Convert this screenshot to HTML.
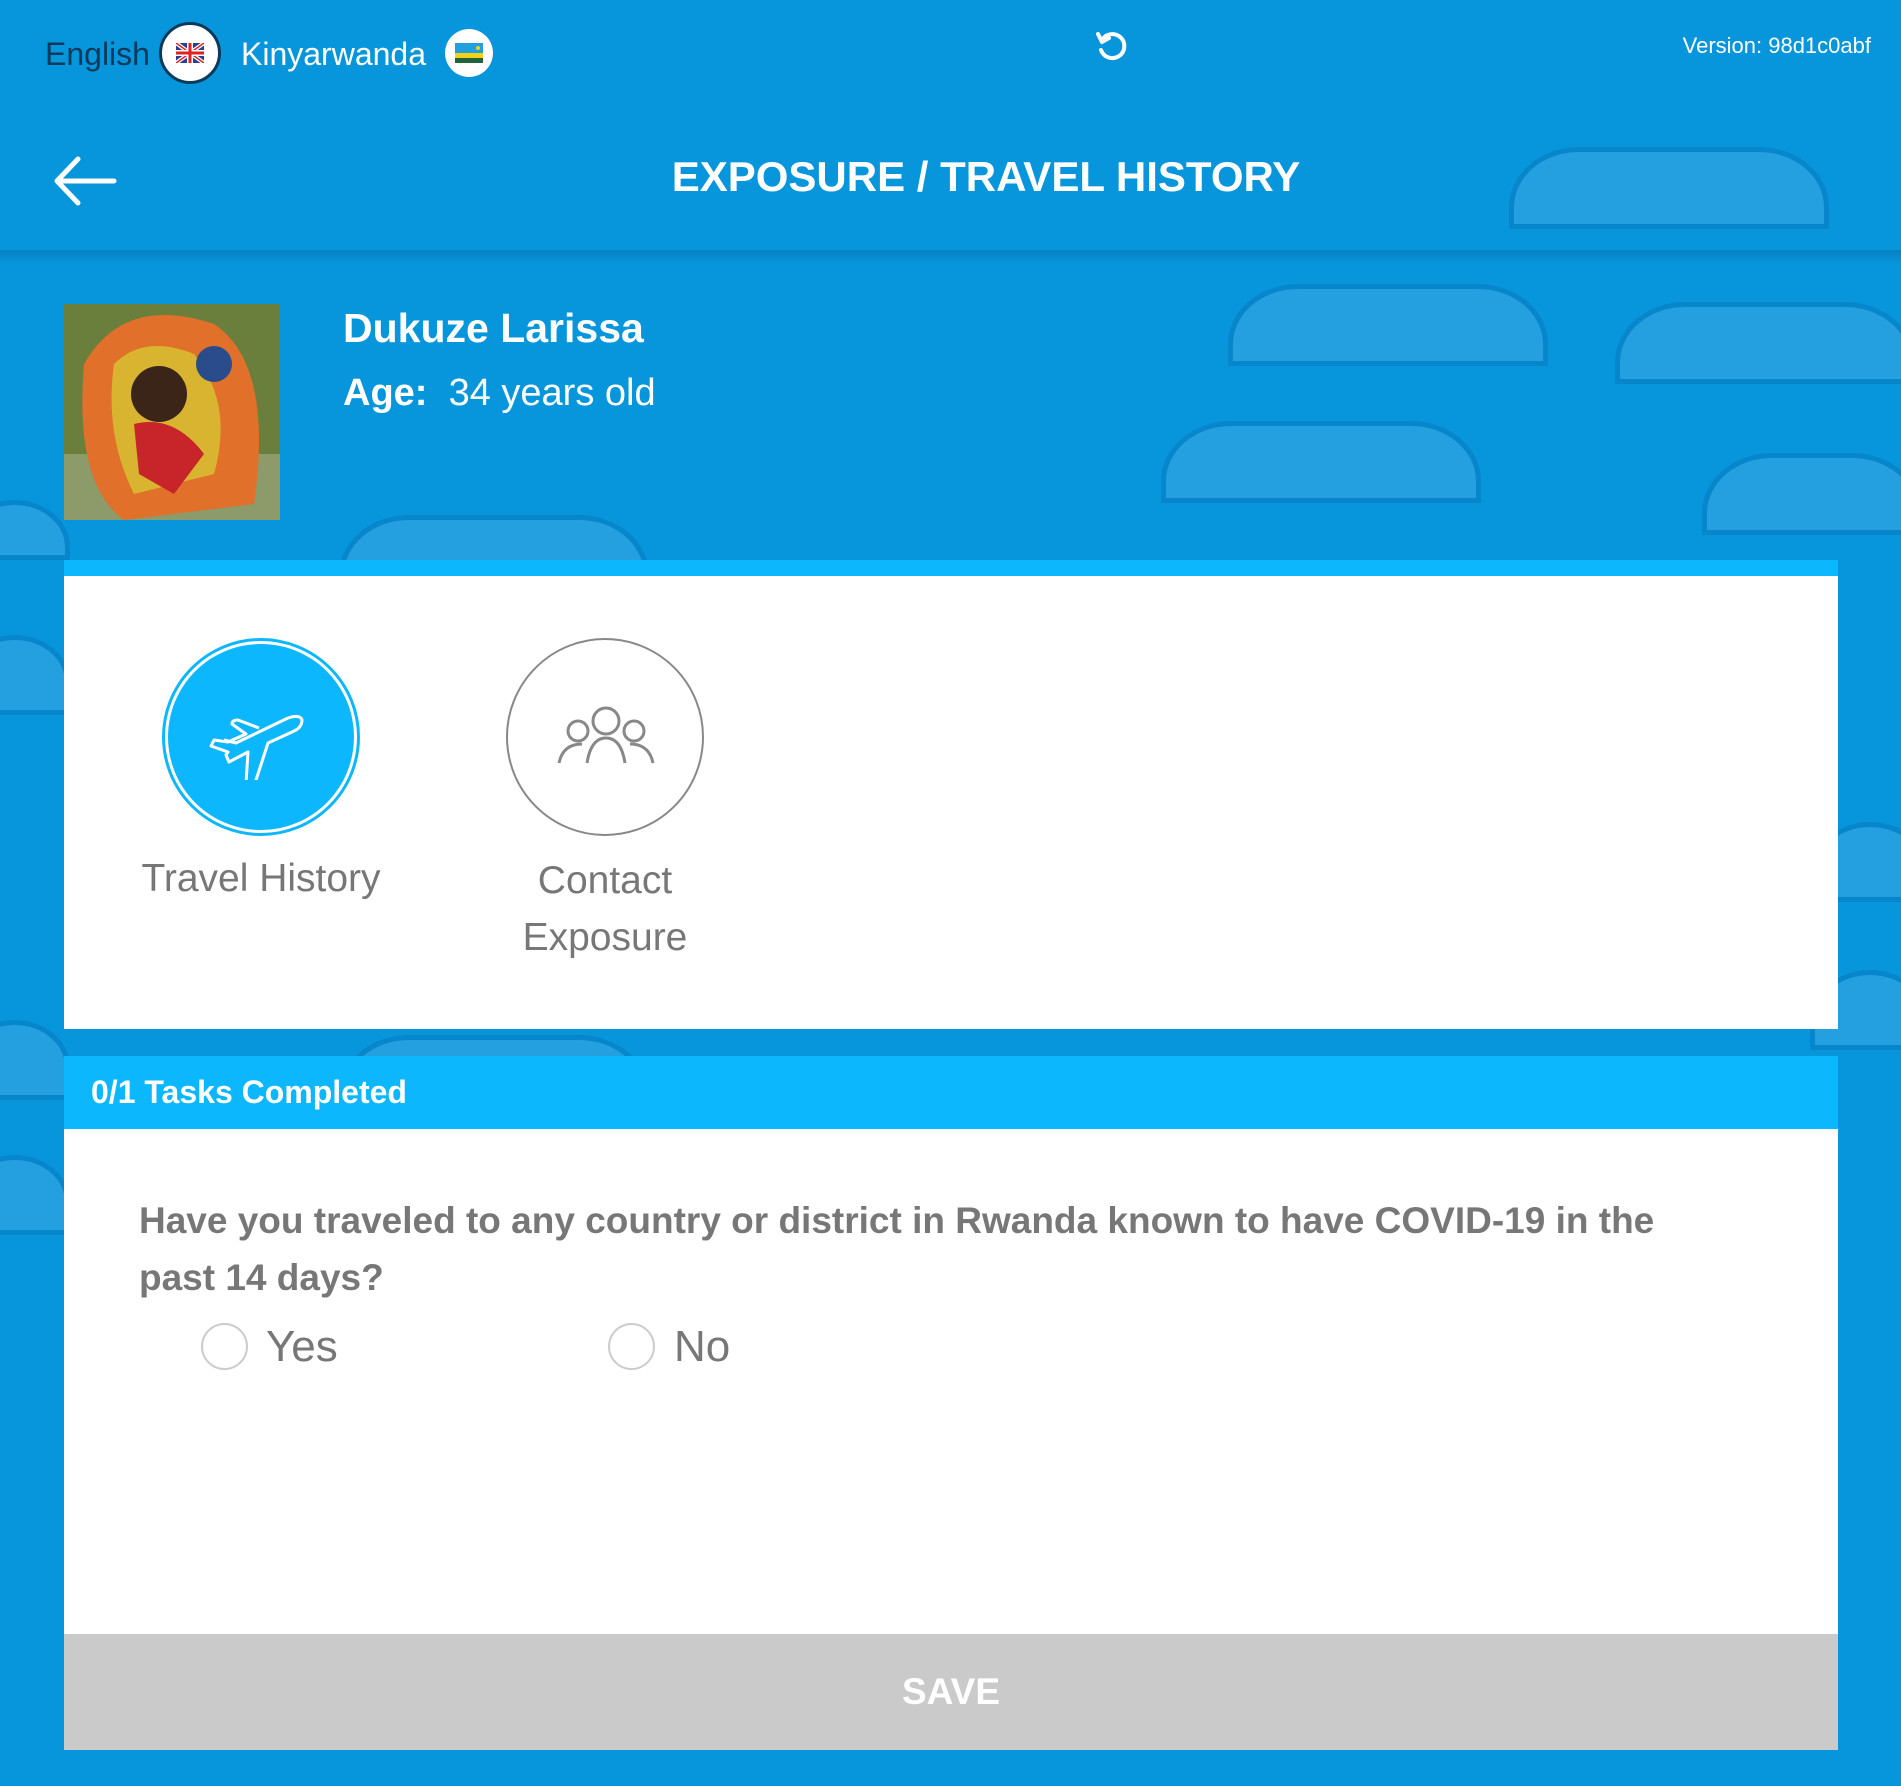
<!DOCTYPE html>
<html><head><meta charset="utf-8"><style>
*{margin:0;padding:0;box-sizing:border-box}
body{width:1901px;height:1786px;background:#0795dc;font-family:"Liberation Sans",sans-serif;position:relative;overflow:hidden}
.dome{position:absolute;background:#249fe0;border:5px solid #0786cc;border-radius:70px 70px 0 0/60px 60px 0 0}
.abs{position:absolute}
.hdrshadow{position:absolute;left:0;top:250px;width:1901px;height:14px;background:linear-gradient(#0781c4,rgba(7,149,220,0))}
</style></head><body>
<div class="dome" style="left:1509px;top:147px;width:320px;height:82px"></div>
<div class="dome" style="left:1228px;top:284px;width:320px;height:82px"></div>
<div class="dome" style="left:1615px;top:302px;width:300px;height:82px"></div>
<div class="dome" style="left:1161px;top:421px;width:320px;height:82px"></div>
<div class="dome" style="left:1702px;top:453px;width:220px;height:82px"></div>
<div class="dome" style="left:339px;top:515px;width:310px;height:82px"></div>
<div class="dome" style="left:-40px;top:500px;width:110px;height:60px"></div>
<div class="dome" style="left:-40px;top:635px;width:110px;height:80px"></div>
<div class="dome" style="left:-40px;top:1020px;width:110px;height:80px"></div>
<div class="dome" style="left:-40px;top:1155px;width:110px;height:80px"></div>
<div class="dome" style="left:1810px;top:822px;width:120px;height:80px"></div>
<div class="dome" style="left:1810px;top:970px;width:120px;height:80px"></div>
<div class="dome" style="left:339px;top:1035px;width:310px;height:82px"></div>
<div class="hdrshadow"></div>

<div class="abs" style="left:45px;top:36px;font-size:32px;color:#0c3a5a">English</div>
<div class="abs" style="left:159px;top:22px;width:62px;height:62px;border-radius:50%;border:3px solid #0c3a5a;background:#fff;padding:0"></div>
<svg class="abs" style="left:176px;top:43px" width="28" height="20" viewBox="0 0 28 20"><rect width="28" height="20" fill="#2a3f8f"/><path d="M0 0L28 20M28 0L0 20" stroke="#fff" stroke-width="4"/><path d="M0 0L28 20M28 0L0 20" stroke="#d22" stroke-width="1.5"/><path d="M14 0V20M0 10H28" stroke="#fff" stroke-width="6"/><path d="M14 0V20M0 10H28" stroke="#d22" stroke-width="3"/></svg>
<div class="abs" style="left:241px;top:36px;font-size:32px;color:#fff">Kinyarwanda</div>
<div class="abs" style="left:445px;top:29px;width:48px;height:48px;border-radius:50%;background:#fff"></div>
<svg class="abs" style="left:455px;top:43px" width="28" height="20"><rect width="28" height="10" fill="#20a0de"/><rect y="10" width="28" height="5" fill="#f5d01a"/><rect y="15" width="28" height="5" fill="#21633a"/><circle cx="23" cy="5" r="2" fill="#f5d01a"/></svg>
<svg class="abs" style="left:1093px;top:28px" width="36" height="36" viewBox="0 0 36 36"><path d="M9 12 A12 12 0 1 1 8 22" fill="none" stroke="#fff" stroke-width="4" stroke-linecap="round"/><path d="M5 6 L9 14 L16 10" fill="none" stroke="#fff" stroke-width="4" stroke-linecap="round" stroke-linejoin="round"/></svg>
<div class="abs" style="right:30px;top:33px;font-size:22px;color:#fff">Version: 98d1c0abf</div>

<svg class="abs" style="left:52px;top:155px" width="66" height="52" viewBox="0 0 66 52"><path d="M62 26H6M26 4L5 26L26 48" fill="none" stroke="#fff" stroke-width="5" stroke-linecap="round" stroke-linejoin="round"/></svg>
<div class="abs" style="left:0;width:1972px;top:153px;text-align:center;font-size:42px;font-weight:bold;color:#fff">EXPOSURE / TRAVEL HISTORY</div>

<svg class="abs" style="left:64px;top:304px" width="216" height="216" viewBox="0 0 216 216"><rect width="216" height="216" fill="#6b7f3c"/><rect x="0" y="150" width="216" height="66" fill="#8d9a6a"/><path d="M20 60 Q60 -10 150 20 Q210 60 190 200 L60 216 Q10 180 20 60Z" fill="#e0702a"/><path d="M50 60 Q80 30 130 50 Q170 100 150 170 L70 190 Q40 130 50 60Z" fill="#d9b430"/><circle cx="95" cy="90" r="28" fill="#3a2518"/><path d="M70 120 Q110 110 140 150 L110 190 L75 170Z" fill="#c8252a"/><circle cx="150" cy="60" r="18" fill="#2a4c8c"/></svg>
<div class="abs" style="left:343px;top:305px;font-size:41px;font-weight:bold;color:#fff">Dukuze Larissa</div>
<div class="abs" style="left:343px;top:372px;font-size:38px;color:#fff"><b>Age:</b>&nbsp; 34 years old</div>

<div class="abs" style="left:64px;top:560px;width:1774px;height:469px;background:#fff;border-top:16px solid #0db7fd"></div>
<div class="abs" style="left:162px;top:638px;width:198px;height:198px;border-radius:50%;border:3px solid #0db7fd;padding:3px;background:#fff"><div style="width:100%;height:100%;border-radius:50%;background:#0db7fd"></div></div>
<svg class="abs" style="left:206px;top:708px" width="112" height="72" viewBox="0 0 112 72"><path d="M18 32 L30 35 L82 10 Q94 6 96 12 Q96 20 86 24 L62 35 L50 72 Q46 78 40 75 L42 44 L23 54 L20 47 L22 44 L5 38 L8 32 L22 34 L40 26 L26 16 Q26 12 32 12 L53 20" fill="none" stroke="#fff" stroke-width="3" stroke-linejoin="round"/></svg>
<div class="abs" style="left:111px;top:857px;width:300px;text-align:center;font-size:39px;color:#777">Travel History</div>
<div class="abs" style="left:506px;top:638px;width:198px;height:198px;border-radius:50%;border:2px solid #888"></div>
<svg class="abs" style="left:555px;top:705px" width="102" height="62" viewBox="0 0 102 62"><g fill="none" stroke="#888" stroke-width="3"><circle cx="51" cy="16" r="13"/><circle cx="23" cy="26" r="10"/><circle cx="79" cy="26" r="10"/><path d="M32 58 Q36 33 51 33 Q66 33 70 58"/><path d="M4 58 Q8 39 27 39"/><path d="M98 58 Q94 39 75 39"/></g></svg>
<div class="abs" style="left:455px;top:852px;width:300px;text-align:center;font-size:39px;color:#777;line-height:57px">Contact<br>Exposure</div>

<div class="abs" style="left:64px;top:1056px;width:1774px;height:74px;background:#0db7fd;color:#fff;font-weight:bold;font-size:32px;padding:18px 0 0 27px">0/1 Tasks Completed</div>
<div class="abs" style="left:64px;top:1129px;width:1774px;height:506px;background:#fff"></div>
<div class="abs" style="left:139px;top:1192px;width:1580px;font-size:37px;font-weight:bold;color:#777;line-height:57px">Have you traveled to any country or district in Rwanda known to have COVID-19 in the past 14 days?</div>
<div class="abs" style="left:201px;top:1323px;width:47px;height:47px;border-radius:50%;border:2px solid #ccc"></div>
<div class="abs" style="left:266px;top:1322px;font-size:44px;color:#777">Yes</div>
<div class="abs" style="left:608px;top:1323px;width:47px;height:47px;border-radius:50%;border:2px solid #ccc"></div>
<div class="abs" style="left:674px;top:1322px;font-size:44px;color:#777">No</div>
<div class="abs" style="left:64px;top:1634px;width:1774px;height:116px;background:#cacaca;color:#fff;font-weight:bold;font-size:37px;text-align:center;line-height:116px">SAVE</div>
</body></html>
